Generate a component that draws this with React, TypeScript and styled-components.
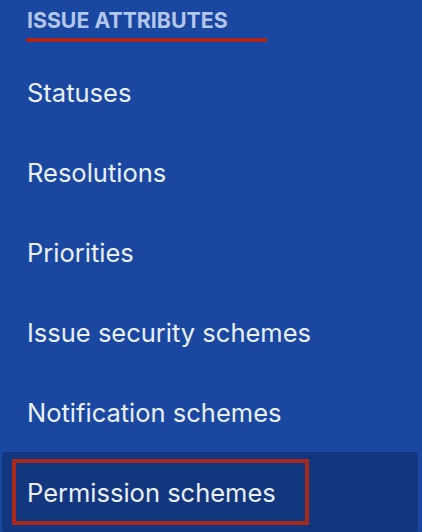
import React from 'react';
import styled, { createGlobalStyle } from 'styled-components';

const GlobalStyle = createGlobalStyle`
    html, body {
        margin: 0;
        padding: 0;
        background: #1a48a0;
    }
    body {
        font-family: Inter, "Noto Sans", sans-serif;
    }
`;

const Sidebar = styled.nav`
    width: 422px;
    height: 532px;
    background: #1a48a0;
    overflow: hidden;
    display: flex;
    flex-flow: column;
`;

const Heading = styled.div`
    height: 52px;
    padding: 9px 0 0 26px;
    box-sizing: border-box;
`;

const HeadingText = styled.h3`
    margin: 0;
    display: inline-block;
    color: #b3c6eb;
    font-size: 21.3px;
    font-weight: 700;
    line-height: 23px;
    padding: 0 39px 6px 1px;
    border-bottom: 4px solid #a8291c;
`;

const List = styled.ul`
    list-style: none;
    margin: 0;
    padding: 0 4px 0 2px;
`;

const Item = styled.li<{ $active?: boolean }>`
    height: 80px;
    display: flex;
    align-items: center;
    padding-left: ${p => (p.$active ? '10px' : '25px')};
    border-radius: 4px;
    background: ${p => (p.$active ? '#12377e' : 'transparent')};
    color: #e9f0fc;
    font-size: 25.5px;
`;

const Marked = styled.span`
    display: flex;
    align-items: center;
    height: 66px;
    width: 297px;
    padding: 0 0 0 11px;
    border: 4px solid #a8291c;
    box-sizing: border-box;
`;

const items = [
    'Statuses',
    'Resolutions',
    'Priorities',
    'Issue security schemes',
    'Notification schemes',
];

const App: React.FC = () => {
    return (
        <>
            <GlobalStyle />
            <Sidebar>
                <Heading>
                    <HeadingText>ISSUE ATTRIBUTES</HeadingText>
                </Heading>
                <List>
                    {items.map(name => (
                        <Item key={name}>{name}</Item>
                    ))}
                    <Item $active>
                        <Marked>Permission schemes</Marked>
                    </Item>
                </List>
            </Sidebar>
        </>
    );
};

export default App;
